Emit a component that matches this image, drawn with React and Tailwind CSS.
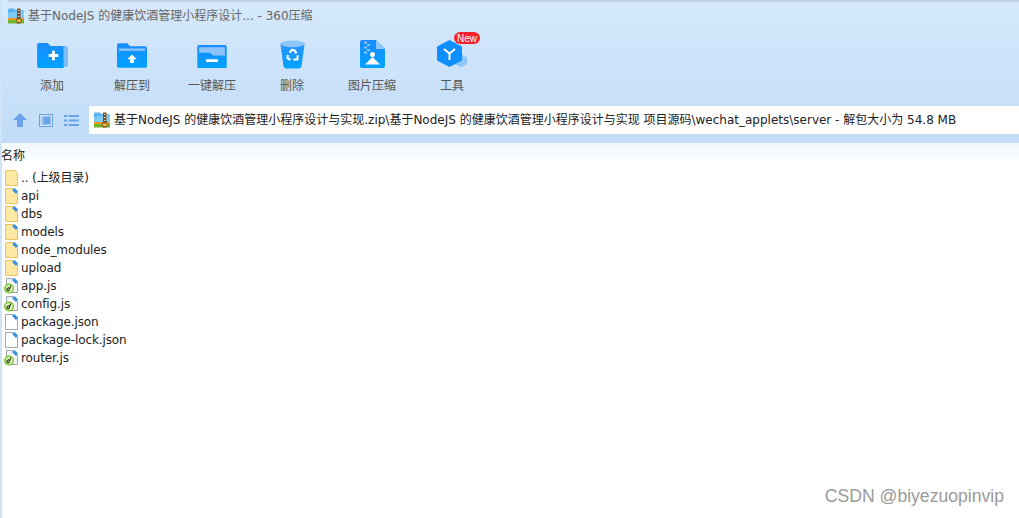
const FONT = "font-['DejaVu_Sans','Noto_Sans_CJK_SC',sans-serif]";

function ZipIcon({ size = 16 }) {
  return (
    <svg width={size} height={size} viewBox="0 0 16 16">
      <path d="M0 1.500 Q0 0.500 1 0.500 H6 L7.500 2 H16 V10 H0 Z" fill="#5cb2f0" />
      <path d="M7 4 L16 2 V10 H0 V5 Z" fill="#7fcaf6" />
      <rect x="0" y="10" width="16" height="2" fill="#f09a1e" />
      <rect x="0" y="12" width="16" height="3.500" fill="#72b52f" />
      <rect x="9" y="0.500" width="3.500" height="15" fill="#7a4f24" />
      <rect x="10" y="2" width="1.500" height="1" fill="#e8d6a8" />
      <rect x="10" y="5" width="1.500" height="1" fill="#e8d6a8" />
      <rect x="10" y="8" width="1.500" height="1" fill="#e8d6a8" />
      <rect x="8.500" y="11" width="4.500" height="3.500" fill="#f0b93a" stroke="#7a4f24" strokeWidth="0.700" />
    </svg>
  );
}

function AddIcon() {
  return (
    <svg className="mt-[3px]" width="31" height="25" viewBox="0 0 32 26">
      <defs>
        <linearGradient id="fa" x1="0" y1="0" x2="0" y2="1">
          <stop offset="0" stopColor="#1a8cff" />
          <stop offset="1" stopColor="#00a2ff" />
        </linearGradient>
      </defs>
      <path d="M27 3 h3 q2 0 2 2 v18 q0 2 -2 2 h-3 Z" fill="#7fbdf8" />
      <path d="M0 2 q0 -2 2 -2 h9 l3 3 h13.500 v23 h-25.500 q-2 0 -2 -2 Z" fill="url(#fa)" />
      <path d="M12 11.500 h3.500 v-3.500 h3 v3.500 h3.500 v3 h-3.500 v3.500 h-3 v-3.500 h-3.500 Z" fill="#fff" />
    </svg>
  );
}

function ExtractIcon() {
  return (
    <svg className="mt-[3px]" width="30" height="25" viewBox="0 0 32 26">
      <defs>
        <linearGradient id="fb" x1="0" y1="0" x2="0" y2="1">
          <stop offset="0" stopColor="#1a8cff" />
          <stop offset="1" stopColor="#00a2ff" />
        </linearGradient>
      </defs>
      <path d="M0 2 q0 -2 2 -2 h9 l3 3 h16 q2 0 2 2 v19 q0 2 -2 2 h-28 q-2 0 -2 -2 Z" fill="url(#fb)" />
      <path d="M2 5.500 h28 v2.500 h-28 Z" fill="#8cc4fa" />
      <path d="M16 12 l5 5 h-3 v4 h-4 v-4 h-3 Z" fill="#fff" />
    </svg>
  );
}

function OneKeyIcon() {
  return (
    <svg className="mt-[5px]" width="30" height="23" viewBox="0 0 32 25">
      <defs>
        <linearGradient id="fc" x1="0" y1="0" x2="0" y2="1">
          <stop offset="0" stopColor="#1a8cff" />
          <stop offset="1" stopColor="#00a2ff" />
        </linearGradient>
      </defs>
      <rect x="0" y="0" width="32" height="25" rx="2" fill="url(#fc)" />
      <path d="M2 2.500 h28 v9 h-13 l-3 -3 h-12 Z" fill="#8cc4fa" />
      <rect x="9.500" y="15.500" width="13" height="3" rx="0.500" fill="#fff" />
    </svg>
  );
}

function TrashIcon() {
  return (
    <svg width="25" height="29" viewBox="0 0 25 30">
      <defs>
        <linearGradient id="fd" x1="0" y1="0" x2="0" y2="1">
          <stop offset="0" stopColor="#2a92ff" />
          <stop offset="1" stopColor="#00a4ff" />
        </linearGradient>
      </defs>
      <path d="M0 4 L3 26 Q3.500 29.500 7 29.500 H18 Q21.500 29.500 22 26 L25 4 Z" fill="url(#fd)" />
      <ellipse cx="12.500" cy="4" rx="12.500" ry="3.500" fill="#8cc6fb" />
      <g fill="none" stroke="#fff" strokeWidth="2.200">
        <path d="M9.500 13 L12 10 L15 11 L16.500 14" />
        <path d="M18 16 L17.500 20 L13.500 20.500" />
        <path d="M10.500 20.500 L7.500 19 L7.500 15.500" />
      </g>
    </svg>
  );
}

function ImageZipIcon() {
  return (
    <svg width="25" height="28" viewBox="0 0 25 28">
      <defs>
        <linearGradient id="fe" x1="0" y1="0" x2="0" y2="1">
          <stop offset="0" stopColor="#1a8cff" />
          <stop offset="1" stopColor="#00a2ff" />
        </linearGradient>
      </defs>
      <path d="M2 0 H16 L25 9 V26 Q25 28 23 28 H2 Q0 28 0 26 V2 Q0 0 2 0 Z" fill="url(#fe)" />
      <path d="M16 0 L25 9 H16 Z" fill="#8cc6fb" />
      <g fill="#8cc6fb">
        <rect x="4" y="1.500" width="3" height="2" />
        <rect x="7" y="4" width="3" height="2" />
        <rect x="4" y="6.500" width="3" height="2" />
        <rect x="7" y="9" width="3" height="2" />
        <rect x="4" y="11.500" width="3" height="2" />
      </g>
      <path d="M5 24.500 L12.500 17 L20 24.500 Z" fill="#fff" />
      <circle cx="12.500" cy="14.500" r="2.500" fill="#fff" />
    </svg>
  );
}

function ToolIcon() {
  return (
    <svg width="30" height="28" viewBox="0 0 30 28">
      <path d="M24 14 L30 17.500 V24 L24 27.500 L18 24 V17.500 Z" fill="#8cc6fb" />
      <path d="M12.500 0 L25 6.500 V20.500 L12.500 27 L0 20.500 V6.500 Z" fill="#0f8fff" />
      <g fill="none" stroke="#fff" strokeWidth="2">
        <path d="M7 9 L12.500 13.500 L18 9" />
        <path d="M12.500 13.500 V20" />
      </g>
    </svg>
  );
}

function Corner() {
  return (
    <g>
      <path d="M8 2 L10.500 0 L14 3.500 L12 6 Z" fill="#3a8fdc" />
      <path d="M9 0 H11 L9.500 1.500 Z" fill="#8fc0ea" />
    </g>
  );
}

function FolderIcon() {
  return (
    <svg width="14" height="16" viewBox="0 0 14 16">
      <path d="M1.500 0.500 H9 L13.500 5 V15.500 H1.500 Z" fill="#fde9a4" stroke="#e8c25c" />
      <Corner />
    </svg>
  );
}

function ParentFolderIcon() {
  return (
    <svg width="14" height="16" viewBox="0 0 14 16">
      <path d="M1.500 0.500 H11 L13.500 3 V15.500 H1.500 Z" fill="#fde9a4" stroke="#e8c25c" />
    </svg>
  );
}

function JsIcon() {
  return (
    <svg width="14" height="16" viewBox="0 0 14 16">
      <path d="M2.500 0.500 H9 L13.500 5 V14.500 H2.500 Z" fill="#f2f4f6" stroke="#a0a8b0" />
      <Corner />
      <circle cx="5" cy="10.500" r="5" fill="#7cc62a" />
      <circle cx="5" cy="10.500" r="3.500" fill="#e2f4c4" />
      <path d="M6.800 7.500 L5 12.500 M5.500 10 Q3 9.500 2.800 12 Q3.500 13 5 12.500" fill="none" stroke="#1f3d12" strokeWidth="1.100" />
    </svg>
  );
}

function FileIcon() {
  return (
    <svg width="14" height="16" viewBox="0 0 14 16">
      <path d="M1.500 0.500 H9 L13.500 5 V15.500 H1.500 Z" fill="#fff" stroke="#a0a8b0" />
      <Corner />
    </svg>
  );
}

const tools = [
  { label: '添加', icon: <AddIcon /> },
  { label: '解压到', icon: <ExtractIcon /> },
  { label: '一键解压', icon: <OneKeyIcon /> },
  { label: '删除', icon: <TrashIcon /> },
  { label: '图片压缩', icon: <ImageZipIcon /> },
  { label: '工具', icon: <ToolIcon />, isNew: true },
];

const files = [
  { name: '.. (上级目录)', icon: <ParentFolderIcon /> },
  { name: 'api', icon: <FolderIcon /> },
  { name: 'dbs', icon: <FolderIcon /> },
  { name: 'models', icon: <FolderIcon /> },
  { name: 'node_modules', icon: <FolderIcon /> },
  { name: 'upload', icon: <FolderIcon /> },
  { name: 'app.js', icon: <JsIcon /> },
  { name: 'config.js', icon: <JsIcon /> },
  { name: 'package.json', icon: <FileIcon /> },
  { name: 'package-lock.json', icon: <FileIcon /> },
  { name: 'router.js', icon: <JsIcon /> },
];

export default function App() {
  return (
    <div className={`relative h-[518px] w-full overflow-hidden bg-white ${FONT}`}>
      <div className="bg-gradient-to-b from-[#d6e9fc] to-[#c1dcf8]">
        <div className="ml-2 h-[2px] bg-[#c3d2e0]" />
        <div className="flex h-[27px] items-center gap-1 pl-2 text-[12px] text-[#666]">
          <ZipIcon size={16} />
          <span>基于NodeJS 的健康饮酒管理小程序设计... - 360压缩</span>
        </div>
        <div className="flex h-[77px] pl-3 pt-[11px]">
          {tools.map((tool) => (
            <div key={tool.label} className="relative flex w-20 flex-col items-center">
              <div className="flex h-[32px] items-start justify-center">{tool.icon}</div>
              <span className="mt-[5px] text-[12px] text-[#555]">{tool.label}</span>
              {tool.isNew && (
                <span className="absolute left-[42px] top-[-8px] flex h-[12px] w-[26px] items-center justify-center rounded-full bg-[#f5222d] font-['Liberation_Sans',sans-serif] text-[10px] text-white">
                  New
                </span>
              )}
            </div>
          ))}
        </div>
        <div className="flex h-[37px] items-start">
          <div className="flex h-[28px] w-[89px] items-center pl-3">
            <svg width="16" height="14" viewBox="0 0 16 14">
              <path d="M8 0 L15 7 H11 V14 H5 V7 H1 Z" fill="#6ba3ea" />
            </svg>
            <svg className="ml-[11px]" width="14" height="13" viewBox="0 0 14 13">
              <rect x="0.500" y="0.500" width="13" height="12" fill="#cfe2f8" stroke="#6ba3ea" />
              <rect x="2.500" y="2.500" width="9" height="8" fill="#6ba3ea" />
              <rect x="2.500" y="2.500" width="2" height="8" fill="#a8caf2" />
            </svg>
            <svg className="ml-[11px]" width="15" height="11" viewBox="0 0 15 11">
              <g fill="#6ba3ea">
                <rect x="0" y="0" width="3" height="2" />
                <rect x="4.500" y="0" width="10.500" height="2" />
                <rect x="0" y="4.500" width="3" height="2" />
                <rect x="4.500" y="4.500" width="10.500" height="2" />
                <rect x="0" y="9" width="3" height="2" />
                <rect x="4.500" y="9" width="10.500" height="2" />
              </g>
            </svg>
          </div>
          <div className="flex h-[28px] flex-1 items-center gap-1 bg-white pl-[5px] text-[12px] text-[#222]">
            <ZipIcon size={16} />
            <span className="whitespace-nowrap">
              基于NodeJS 的健康饮酒管理小程序设计与实现.zip\基于NodeJS 的健康饮酒管理小程序设计与实现 项目源码\wechat_applets\server - 解包大小为 54.8 MB
            </span>
          </div>
        </div>
      </div>

      <div className="flex h-[24px] items-center bg-gradient-to-b from-[#f3f8fe] to-white pl-[1px] pt-[1px] text-[12px] text-[#222]">
        名称
      </div>

      <div className="pl-[4px] pt-[2px]">
        {files.map((file) => (
          <div key={file.name} className="flex h-[18px] items-center gap-[3px] text-[12px] tracking-[-0.12px] text-[#222]">
            {file.icon}
            <span className="whitespace-nowrap">{file.name}</span>
          </div>
        ))}
      </div>

      <div className="absolute left-0 top-0 h-full w-[2px] bg-[#cfe3f9]" />
      <span className="absolute bottom-[9px] right-[15px] font-['Liberation_Sans',sans-serif] text-[17.6px] text-[#9a9a9a]">
        CSDN @biyezuopinvip
      </span>
    </div>
  );
}
